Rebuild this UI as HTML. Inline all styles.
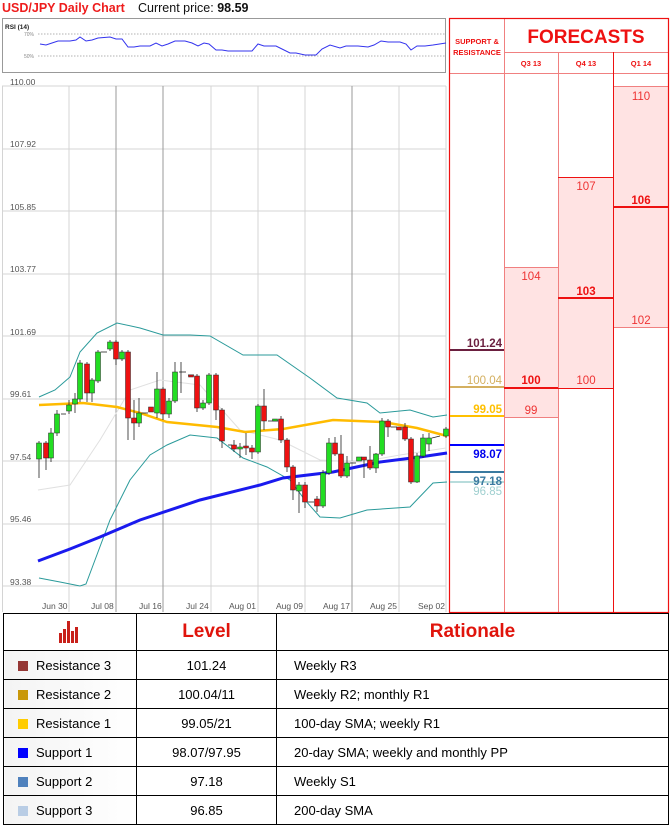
<!DOCTYPE html>
<html><head><meta charset="utf-8"><style>
body{margin:0;width:672px;height:825px;background:#fff;font-family:"Liberation Sans",sans-serif;overflow:hidden;position:relative}
svg{position:absolute;left:0;top:0}
table{position:absolute;left:3px;top:613px;width:666px;border-collapse:collapse;font-family:"Liberation Sans",sans-serif;font-size:13px;table-layout:fixed}
td{border:1.5px solid #000;height:28px;padding:0;white-space:nowrap}
td.n{padding-left:14px;background:linear-gradient(90deg,#f4f4f4,#fff)}
td.c{text-align:center}
td.r{padding-left:17px}
.sq{display:inline-block;width:10px;height:10px;margin-right:8px;vertical-align:-1px}
th{border:1.5px solid #000;height:34px;color:#e0140c;font-size:19px;font-weight:bold}
</style></head><body>
<svg width="672" height="613" viewBox="0 0 672 613" font-family="Liberation Sans, sans-serif">
<text x="2" y="12" font-size="12.5" font-weight="bold" fill="#ee1c1c">USD/JPY Daily Chart</text>
<text x="138" y="12" font-size="12.5" fill="#111">Current price: <tspan font-weight="bold">98.59</tspan></text>
<rect x="2.5" y="18.5" width="443" height="54" fill="#fff" stroke="#999"/>
<text x="5" y="29" font-size="6.5" font-weight="bold" fill="#222">RSI (14)</text>
<line x1="38" y1="34" x2="445" y2="34" stroke="#999" stroke-dasharray="1.5,1.5" stroke-width="0.7"/>
<line x1="38" y1="56" x2="445" y2="56" stroke="#999" stroke-dasharray="1.5,1.5" stroke-width="0.7"/>
<text x="24" y="36" font-size="5" fill="#888">70%</text><text x="24" y="58" font-size="5" fill="#888">50%</text>
<polyline fill="none" stroke="#3333ee" stroke-width="1" points="40,44 46,45 52,43 58,41 64,41 70,41 76,40 80,37 86,41 92,40 98,38 110,37 116,39 122,39 128,47 134,47 140,46 150,46 156,43 162,46 168,44 175,41 185,41 192,43 198,46 204,43 209,44 216,50 222,50 228,51 240,51 252,51 258,44 264,46 276,46 282,49 290,53 296,53 305,55 316,55 322,49 330,45 340,48 346,46 358,46 368,47 374,45 381,41 388,42 400,42 406,44 411,50 417,46 425,46 433,45 446,43"/>
<g stroke="#d4d4d4" stroke-width="1">
<line x1="2" y1="86" x2="446" y2="86"/><line x1="2" y1="149" x2="446" y2="149"/><line x1="2" y1="211" x2="446" y2="211"/><line x1="2" y1="274" x2="446" y2="274"/><line x1="2" y1="336" x2="446" y2="336"/><line x1="2" y1="399" x2="446" y2="399"/><line x1="2" y1="461" x2="446" y2="461"/><line x1="2" y1="524" x2="446" y2="524"/><line x1="2" y1="586" x2="446" y2="586"/>
<line x1="2.5" y1="86" x2="2.5" y2="612"/><line x1="69" y1="86" x2="69" y2="612"/><line x1="211" y1="86" x2="211" y2="612"/><line x1="258" y1="86" x2="258" y2="612"/><line x1="305" y1="86" x2="305" y2="612"/><line x1="399" y1="86" x2="399" y2="612"/><line x1="446" y1="86" x2="446" y2="612"/>
</g>
<g stroke="#9a9a9a"><line x1="116" y1="86" x2="116" y2="612"/><line x1="163" y1="86" x2="163" y2="612"/><line x1="352" y1="86" x2="352" y2="612"/></g>
<g font-size="8.5" fill="#555">
<text x="10" y="85">110.00</text><text x="10" y="147">107.92</text><text x="10" y="210">105.85</text><text x="10" y="272">103.77</text><text x="10" y="335">101.69</text><text x="10" y="397">99.61</text><text x="10" y="460">97.54</text><text x="10" y="522">95.46</text><text x="10" y="585">93.38</text>
<text x="42" y="609">Jun 30</text><text x="91" y="609">Jul 08</text><text x="139" y="609">Jul 16</text><text x="186" y="609">Jul 24</text><text x="229" y="609">Aug 01</text><text x="276" y="609">Aug 09</text><text x="323" y="609">Aug 17</text><text x="370" y="609">Aug 25</text><text x="418" y="609">Sep 02</text>
</g>
<polyline fill="none" stroke="#e0e0e0" points="38,490 70,485 100,440 130,390 160,380 200,385 240,430 280,440 320,460 360,462 400,455 446,448"/>
<polyline fill="none" stroke="#2a9a9a" stroke-width="1" points="39,397 55,390 70,377 80,352 97,333 117,323 140,328 163,335 190,335 210,336 243,355 277,355 310,378 337,398 367,403 380,413 410,410 433,417 447,415"/>
<polyline fill="none" stroke="#2a9a9a" stroke-width="1" points="39,578 60,582 80,586 86,584 95,560 110,520 130,480 150,455 167,445 190,435 217,438 243,458 267,467 290,480 305,500 320,517 340,518 367,510 410,507 433,483 447,482"/>
<polyline fill="none" stroke="#ffbb00" stroke-width="2.5" points="39,405 83,403 117,407 140,413 167,422 217,427 245,432 283,429 333,420 383,422 417,428 447,436"/>
<polyline fill="none" stroke="#1a1aee" stroke-width="3" points="38,561 70,549 100,537 140,520 200,500 260,485 283,478 333,472 380,462 420,457 447,453"/>
<g stroke="#222" stroke-width="0.8">
<line x1="39" y1="441" x2="39" y2="478"/><line x1="46" y1="441" x2="46" y2="470"/><line x1="51" y1="428" x2="51" y2="462"/><line x1="57" y1="410" x2="57" y2="436"/><line x1="69" y1="400" x2="69" y2="414"/><line x1="75" y1="393" x2="75" y2="413"/><line x1="80" y1="360" x2="80" y2="402"/><line x1="87" y1="362" x2="87" y2="402"/><line x1="92" y1="378" x2="92" y2="402"/><line x1="98" y1="350" x2="98" y2="383"/><line x1="110" y1="340" x2="110" y2="351"/><line x1="116" y1="340" x2="116" y2="365"/><line x1="122" y1="350" x2="122" y2="361"/><line x1="128" y1="350" x2="128" y2="440"/><line x1="134" y1="400" x2="134" y2="440"/><line x1="139" y1="398" x2="139" y2="427"/><line x1="157" y1="372" x2="157" y2="418"/><line x1="163" y1="387" x2="163" y2="420"/><line x1="169" y1="398" x2="169" y2="418"/><line x1="175" y1="362" x2="175" y2="403"/><line x1="181" y1="362" x2="181" y2="393"/><line x1="197" y1="374" x2="197" y2="412"/><line x1="203" y1="400" x2="203" y2="410"/><line x1="209" y1="373" x2="209" y2="405"/><line x1="216" y1="373" x2="216" y2="420"/><line x1="222" y1="408" x2="222" y2="448"/><line x1="234" y1="440" x2="234" y2="452"/><line x1="240" y1="443" x2="240" y2="458"/><line x1="246" y1="433" x2="246" y2="455"/><line x1="252" y1="445" x2="252" y2="459"/><line x1="258" y1="404" x2="258" y2="454"/><line x1="264" y1="389" x2="264" y2="430"/><line x1="281" y1="416" x2="281" y2="443"/><line x1="287" y1="438" x2="287" y2="472"/><line x1="293" y1="465" x2="293" y2="500"/><line x1="299" y1="482" x2="299" y2="513"/><line x1="305" y1="482" x2="305" y2="508"/><line x1="317" y1="496" x2="317" y2="512"/><line x1="323" y1="470" x2="323" y2="508"/><line x1="329" y1="438" x2="329" y2="475"/><line x1="335" y1="437" x2="335" y2="456"/><line x1="341" y1="435" x2="341" y2="478"/><line x1="347" y1="456" x2="347" y2="478"/><line x1="364" y1="457" x2="364" y2="478"/><line x1="370" y1="446" x2="370" y2="470"/><line x1="376" y1="453" x2="376" y2="473"/><line x1="382" y1="418" x2="382" y2="456"/><line x1="388" y1="419" x2="388" y2="437"/><line x1="405" y1="423" x2="405" y2="441"/><line x1="411" y1="437" x2="411" y2="484"/><line x1="417" y1="453" x2="417" y2="483"/><line x1="423" y1="434" x2="423" y2="458"/><line x1="429" y1="433" x2="429" y2="451"/><line x1="446" y1="427" x2="446" y2="438"/>
<line x1="61" y1="414" x2="66" y2="414"/><line x1="101" y1="352" x2="107" y2="352"/><line x1="142" y1="413" x2="148" y2="413"/><line x1="179" y1="372" x2="186" y2="372"/><line x1="188" y1="375" x2="194" y2="375"/><line x1="228" y1="445" x2="232" y2="445"/><line x1="268" y1="421" x2="278" y2="421"/><line x1="308" y1="502" x2="314" y2="502"/><line x1="350" y1="463" x2="356" y2="463"/><line x1="391" y1="427" x2="397" y2="427"/><line x1="432" y1="438" x2="440" y2="436"/>
</g>
<g fill="#22dd22" stroke="#222" stroke-width="0.5">
<rect x="36.5" y="443" width="5" height="16"/><rect x="48.5" y="433" width="5" height="25"/><rect x="54.5" y="414" width="5" height="19"/><rect x="66.5" y="405" width="5" height="6"/><rect x="72.5" y="399" width="5" height="5"/><rect x="77.5" y="363" width="5" height="36"/><rect x="89.5" y="380" width="5" height="13"/><rect x="95.5" y="352" width="5" height="29"/><rect x="107.5" y="342" width="5" height="7"/><rect x="119.5" y="352" width="5" height="7"/><rect x="136.5" y="413" width="5" height="10"/><rect x="154.5" y="389" width="5" height="24"/><rect x="166.5" y="401" width="5" height="13"/><rect x="172.5" y="372" width="5" height="29"/><rect x="200.5" y="403" width="5" height="5"/><rect x="206.5" y="375" width="5" height="28"/><rect x="237.5" y="447" width="5" height="2"/><rect x="255.5" y="406" width="5" height="46"/><rect x="272.5" y="419" width="5" height="2"/><rect x="296.5" y="485" width="5" height="6"/><rect x="320.5" y="473" width="5" height="33"/><rect x="326.5" y="443" width="5" height="30"/><rect x="344.5" y="463" width="5" height="13"/><rect x="356.5" y="457" width="5" height="4"/><rect x="373.5" y="454" width="5" height="14"/><rect x="379.5" y="421" width="5" height="33"/><rect x="414.5" y="456" width="5" height="26"/><rect x="420.5" y="438" width="5" height="18"/><rect x="426.5" y="438" width="5" height="6"/><rect x="443.5" y="429" width="5" height="7"/>
</g>
<g fill="#ee1111" stroke="#222" stroke-width="0.5">
<rect x="43.5" y="443" width="5" height="15"/><rect x="84.5" y="364" width="5" height="29"/><rect x="113.5" y="342" width="5" height="17"/><rect x="125.5" y="352" width="5" height="66"/><rect x="131.5" y="418" width="5" height="5"/><rect x="148.5" y="407" width="5" height="5"/><rect x="160.5" y="389" width="5" height="25"/><rect x="188.5" y="375" width="5" height="2"/><rect x="194.5" y="376" width="5" height="32"/><rect x="213.5" y="375" width="5" height="35"/><rect x="219.5" y="410" width="5" height="31"/><rect x="231.5" y="445" width="5" height="4"/><rect x="243.5" y="446" width="5" height="2"/><rect x="249.5" y="448" width="5" height="4"/><rect x="261.5" y="406" width="5" height="15"/><rect x="278.5" y="419" width="5" height="21"/><rect x="284.5" y="440" width="5" height="27"/><rect x="290.5" y="467" width="5" height="23"/><rect x="302.5" y="485" width="5" height="17"/><rect x="314.5" y="499" width="5" height="7"/><rect x="332.5" y="443" width="5" height="11"/><rect x="338.5" y="454" width="5" height="22"/><rect x="361.5" y="457" width="5" height="3"/><rect x="367.5" y="460" width="5" height="8"/><rect x="385.5" y="421" width="5" height="6"/><rect x="396.5" y="427" width="5" height="3"/><rect x="402.5" y="427" width="5" height="12"/><rect x="408.5" y="439" width="5" height="43"/>
</g>
<g fill="#ffe3e3">
<rect x="504" y="267" width="54" height="150"/><rect x="558" y="177" width="55" height="211"/><rect x="613" y="86" width="56" height="241"/>
</g>
<g stroke="#f08080" stroke-width="1" fill="none">
<line x1="504.5" y1="18" x2="504.5" y2="612"/><line x1="558.5" y1="52" x2="558.5" y2="612"/>
<line x1="504" y1="52.5" x2="669" y2="52.5"/><line x1="449" y1="73.5" x2="669" y2="73.5"/>
<line x1="504" y1="267.5" x2="558" y2="267.5"/><line x1="504" y1="417.5" x2="558" y2="417.5"/>
<line x1="613" y1="86.5" x2="669" y2="86.5"/><line x1="613" y1="327.5" x2="669" y2="327.5"/>
</g>
<g stroke="#ee1111" fill="none">
<rect x="449.5" y="18.5" width="219" height="594" stroke-width="1.2"/>
<line x1="613.5" y1="52" x2="613.5" y2="612"/>
<line x1="558" y1="177.5" x2="613" y2="177.5"/><line x1="558" y1="388.5" x2="613" y2="388.5"/>
<line x1="504" y1="388" x2="558" y2="388" stroke-width="2"/><line x1="558" y1="298" x2="613" y2="298" stroke-width="2"/><line x1="613" y1="207" x2="669" y2="207" stroke-width="2"/>
</g>
<text x="477" y="44" font-size="7.5" font-weight="bold" fill="#ee1111" text-anchor="middle">SUPPORT &amp;</text>
<text x="477" y="55" font-size="7.5" font-weight="bold" fill="#ee1111" text-anchor="middle">RESISTANCE</text>
<text x="586" y="43" font-size="19" font-weight="bold" fill="#ee1111" text-anchor="middle">FORECASTS</text>
<g font-size="7.5" font-weight="bold" fill="#ee1111" text-anchor="middle"><text x="531" y="66">Q3 13</text><text x="586" y="66">Q4 13</text><text x="641" y="66">Q1 14</text></g>
<g font-size="11.5" fill="#ee3333" text-anchor="middle">
<text x="531" y="280">104</text><text x="531" y="384" font-weight="bold" fill="#ee1111">100</text><text x="531" y="414">99</text>
<text x="586" y="190">107</text><text x="586" y="295" font-weight="bold" fill="#ee1111">103</text><text x="586" y="384">100</text>
<text x="641" y="100">110</text><text x="641" y="204" font-weight="bold" fill="#ee1111">106</text><text x="641" y="324">102</text>
</g>
<line x1="450" y1="350" x2="504" y2="350" stroke="#6b1f3f" stroke-width="2"/>
<line x1="450" y1="387" x2="504" y2="387" stroke="#d4b060" stroke-width="2"/>
<line x1="450" y1="416" x2="504" y2="416" stroke="#ffc000" stroke-width="2"/>
<line x1="450" y1="445" x2="504" y2="445" stroke="#0000ff" stroke-width="2"/>
<line x1="450" y1="472" x2="504" y2="472" stroke="#3a7aa0" stroke-width="2"/>
<line x1="450" y1="482" x2="504" y2="482" stroke="#a0d0d0" stroke-width="1.5"/>
<g font-size="11.5" font-weight="bold" text-anchor="end">
<text x="502" y="347" fill="#6b1f3f">101.24</text><text x="502" y="384" fill="#d4b060" font-weight="normal">100.04</text><text x="502" y="413" fill="#ffc000">99.05</text><text x="502" y="458" fill="#0000ee">98.07</text><text x="502" y="485" fill="#3a7aa0">97.18</text><text x="502" y="495" fill="#a0d0d0" font-weight="normal">96.85</text>
</g>
</svg>
<table>
<colgroup><col style="width:133px"><col style="width:140px"><col></colgroup>
<tr><th><svg width="22" height="22" viewBox="0 0 22 22" style="position:static;vertical-align:middle"><g fill="#c8201a"><rect x="0" y="12" width="3" height="10"/><rect x="4" y="8" width="3" height="14"/><rect x="8" y="0" width="3" height="22"/><rect x="12" y="10" width="3" height="12"/><rect x="16" y="6" width="3" height="16"/></g></svg></th><th>Level</th><th>Rationale</th></tr>
<tr><td class="n"><span class="sq" style="background:#953735"></span>Resistance 3</td><td class="c">101.24</td><td class="r">Weekly R3</td></tr>
<tr><td class="n"><span class="sq" style="background:#c9980a"></span>Resistance 2</td><td class="c">100.04/11</td><td class="r">Weekly R2; monthly R1</td></tr>
<tr><td class="n"><span class="sq" style="background:#ffcc00"></span>Resistance 1</td><td class="c">99.05/21</td><td class="r">100-day SMA; weekly R1</td></tr>
<tr><td class="n"><span class="sq" style="background:#0000ff"></span>Support 1</td><td class="c">98.07/97.95</td><td class="r">20-day SMA; weekly and monthly PP</td></tr>
<tr><td class="n"><span class="sq" style="background:#4f81bd"></span>Support 2</td><td class="c">97.18</td><td class="r">Weekly S1</td></tr>
<tr><td class="n"><span class="sq" style="background:#b9cde5"></span>Support 3</td><td class="c">96.85</td><td class="r">200-day SMA</td></tr>
</table>
</body></html>
